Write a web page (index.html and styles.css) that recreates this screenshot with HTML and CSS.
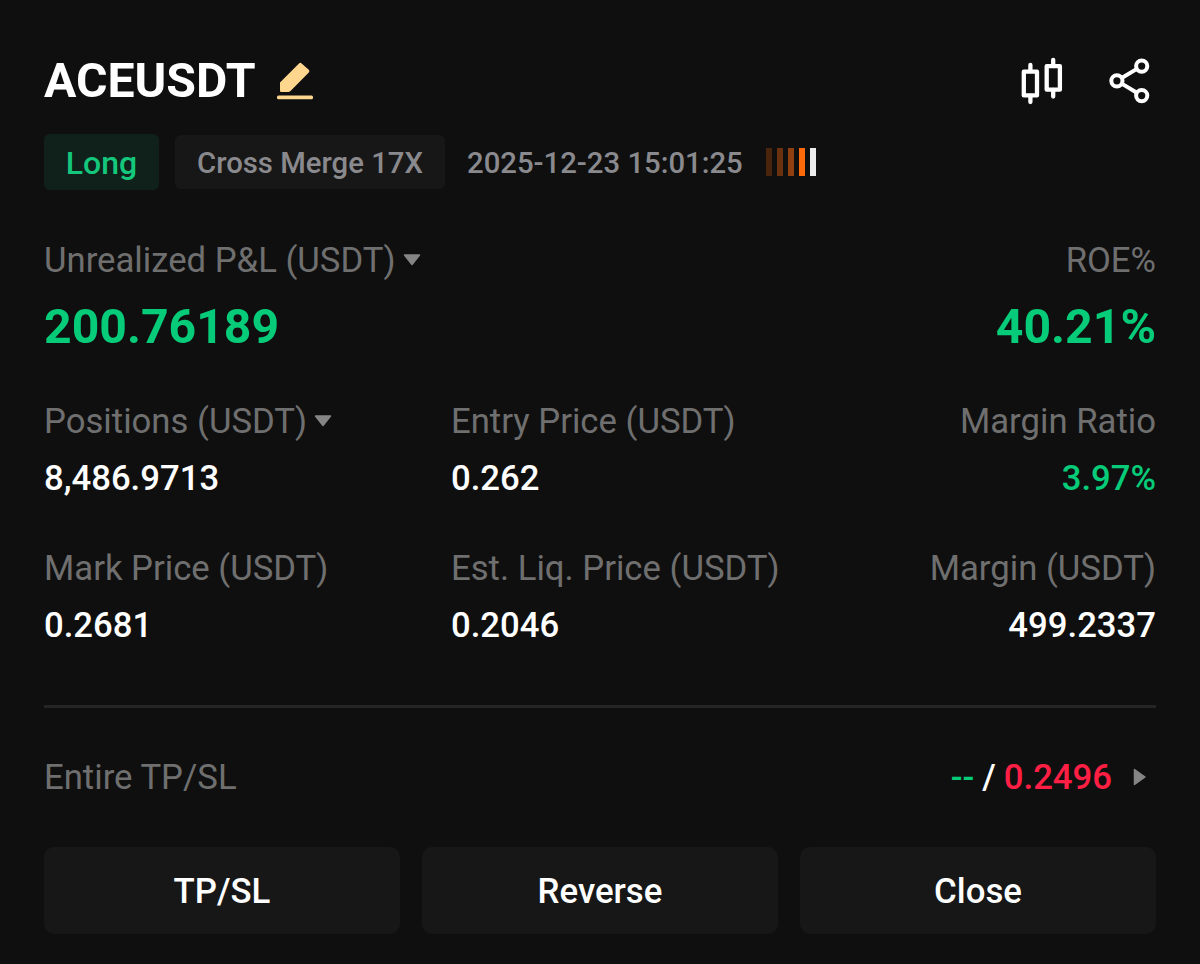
FILE: index.html
```
<!DOCTYPE html>
<html lang="en">
<head>
    <meta charset="UTF-8">
    <meta name="viewport" content="width=device-width, initial-scale=1.0">
    <title>ACEUSDT</title>
    <link rel="stylesheet" href="styles.css">
</head>
<body>
    <div class="position-card">
        <div class="header">
            <h1>ACEUSDT</h1>
            <svg class="edit-icon" width="38" height="40" viewBox="0 0 38 40">
                <path d="M4 21.500 L23 2.400 Q24.300 1.200 25.600 2.400 L32.800 8.800 Q34.100 10.100 32.800 11.400 L14.500 30 Q13.500 31 12.200 31 H5.300 Q4 31 4 29.700 Z" fill="#ffd68e"/>
                <rect x="1" y="34.500" width="36" height="3.800" rx="1.500" fill="#ffd68e"/>
            </svg>
            <div class="actions">
                <svg width="44" height="48" viewBox="0 0 44 48" fill="none" stroke="#fff" stroke-width="4.300" stroke-linecap="round" stroke-linejoin="round">
                    <rect x="3.800" y="14.700" width="13.200" height="23.700"/>
                    <path d="M10.400 8 V14 M10.400 39 V45"/>
                    <rect x="26.700" y="9.200" width="13.200" height="23.500"/>
                    <path d="M33.200 2.800 V9 M33.200 33 V39.500"/>
                </svg>
                <svg width="42" height="48" viewBox="0 0 42 48" fill="none" stroke="#fff" stroke-width="4">
                    <circle cx="8.900" cy="23.800" r="5.600"/>
                    <circle cx="33.700" cy="9.100" r="5.600"/>
                    <circle cx="33.700" cy="38.600" r="5.600"/>
                    <path d="M13.700 21 L28.900 11.900 M13.700 26.600 L28.900 35.800"/>
                </svg>
            </div>
        </div>

        <div class="tags">
            <span class="tag long">Long</span>
            <span class="tag merge">Cross Merge 17X</span>
            <span class="date">2025-12-23 15:01:25</span>
            <div class="bars">
                <i class="bar bar-1"></i>
                <i class="bar bar-2"></i>
                <i class="bar bar-3"></i>
                <i class="bar bar-4"></i>
                <i class="bar bar-5"></i>
            </div>
        </div>

        <div class="row pnl">
            <div class="cell">
                <div class="label">Unrealized P&amp;L (USDT)<svg class="arrow" width="18" height="12" viewBox="0 0 18 12"><path d="M1.500 1 H16.500 L9 10.500 Z"/></svg></div>
                <div class="big">200.76189</div>
            </div>
            <div class="cell right">
                <div class="label">ROE%</div>
                <div class="big">40.21%</div>
            </div>
        </div>

        <div class="row stats">
            <div class="cell">
                <div class="label">Positions (USDT)<svg class="arrow" width="18" height="12" viewBox="0 0 18 12"><path d="M1.500 1 H16.500 L9 10.500 Z"/></svg></div>
                <div class="value">8,486.9713</div>
            </div>
            <div class="cell">
                <div class="label">Entry Price (USDT)</div>
                <div class="value">0.262</div>
            </div>
            <div class="cell right">
                <div class="label">Margin Ratio</div>
                <div class="value green">3.97%</div>
            </div>
            <div class="cell">
                <div class="label">Mark Price (USDT)</div>
                <div class="value">0.2681</div>
            </div>
            <div class="cell">
                <div class="label">Est. Liq. Price (USDT)</div>
                <div class="value">0.2046</div>
            </div>
            <div class="cell right">
                <div class="label">Margin (USDT)</div>
                <div class="value">499.2337</div>
            </div>
        </div>

        <div class="tpsl">
            <div class="label">Entire TP/SL</div>
            <div class="tpsl-value">
                <span class="green">--</span>
                <span class="slash">/</span>
                <span class="red">0.2496</span>
                <svg class="next" width="14" height="18" viewBox="0 0 14 18"><path d="M1.500 1.500 V16.500 L12 9 Z"/></svg>
            </div>
        </div>

        <div class="buttons">
            <button>TP/SL</button>
            <button>Reverse</button>
            <button>Close</button>
        </div>
    </div>
</body>
</html>
```
FILE: styles.css
```
* {
    box-sizing: border-box;
}
body {
    margin: 0;
    background-color: #0f0f0f;
    color: #fff;
    font-family: Roboto, sans-serif;
}
.position-card {
    height: 964px;
    padding: 53px 44px 0;
}
.header {
    display: flex;
    align-items: center;
    height: 56px;
}
h1 {
    margin: 0;
    font-size: 48.2px;
    line-height: 56px;
    font-weight: 700;
}
.edit-icon {
    margin-left: 20px;
}
.actions {
    display: flex;
    gap: 44px;
    margin-left: auto;
    margin-right: 6px;
}

/* Tags under the title */
.tags {
    display: flex;
    align-items: center;
    height: 56px;
    margin-top: 25px;
    font-size: 29.3px;
    font-weight: 500;
    color: #8a8a8e;
}
.tag {
    border-radius: 6px;
    text-align: center;
}
.long {
    width: 115px;
    height: 56px;
    line-height: 58px;
    background-color: #0f211a;
    color: #14c77c;
    font-size: 32px;
}
.merge {
    width: 270px;
    height: 54px;
    line-height: 56px;
    margin-left: 16px;
    background-color: #171717;
}
.date {
    width: 277px;
    height: 54px;
    line-height: 56px;
    margin-left: 22px;
    white-space: nowrap;
}
.bars {
    display: flex;
    gap: 5px;
    margin-left: 22px;
}
.bar {
    width: 6px;
    height: 28px;
}
.bar-1 { background-color: #4a240d; }
.bar-2 { background-color: #6b3210; }
.bar-3 { background-color: #8f3f10; }
.bar-4 { background-color: #ff6a0a; }
.bar-5 { background-color: #ececec; }

.row {
    display: grid;
}
.pnl {
    grid-template-columns: 1fr auto;
    margin-top: 50px;
}
.stats {
    grid-template-columns: 407px 1fr auto;
    row-gap: 49px;
    margin-top: 46px;
}
.right {
    text-align: right;
}
.label {
    height: 40px;
    font-size: 34.7px;
    line-height: 40px;
    color: #6f6f6f;
    white-space: nowrap;
}
.arrow {
    margin-left: 7px;
    vertical-align: 6px;
}
.arrow path,
.next path {
    fill: #858585;
    stroke: #858585;
    stroke-width: 1.5;
    stroke-linejoin: round;
}
.big {
    margin-top: 19px;
    font-size: 48.2px;
    line-height: 56px;
    font-weight: 700;
    color: #06cb79;
}
.value {
    margin-top: 17px;
    padding-bottom: 1px;
    font-size: 34.7px;
    line-height: 40px;
    font-weight: 500;
}
.green {
    color: #06cb79;
}
.red {
    color: #ff1f44;
}

/* Take profit / stop loss */
.tpsl {
    display: flex;
    justify-content: space-between;
    margin-top: 59px;
    padding-top: 49px;
    border-top: 3px solid #252525;
}
.tpsl-value {
    display: flex;
    align-items: center;
    gap: 8px;
    margin-right: 9px;
    font-size: 34.7px;
    line-height: 40px;
    font-weight: 500;
}
.next {
    margin-left: 13px;
}
.buttons {
    display: grid;
    grid-template-columns: repeat(3, 1fr);
    gap: 22px;
    margin-top: 50px;
}
button {
    height: 87px;
    padding: 0;
    border: none;
    border-radius: 10px;
    background-color: #171717;
    color: #fff;
    font-family: inherit;
    font-size: 34.8px;
    font-weight: 500;
    cursor: pointer;
}
```
